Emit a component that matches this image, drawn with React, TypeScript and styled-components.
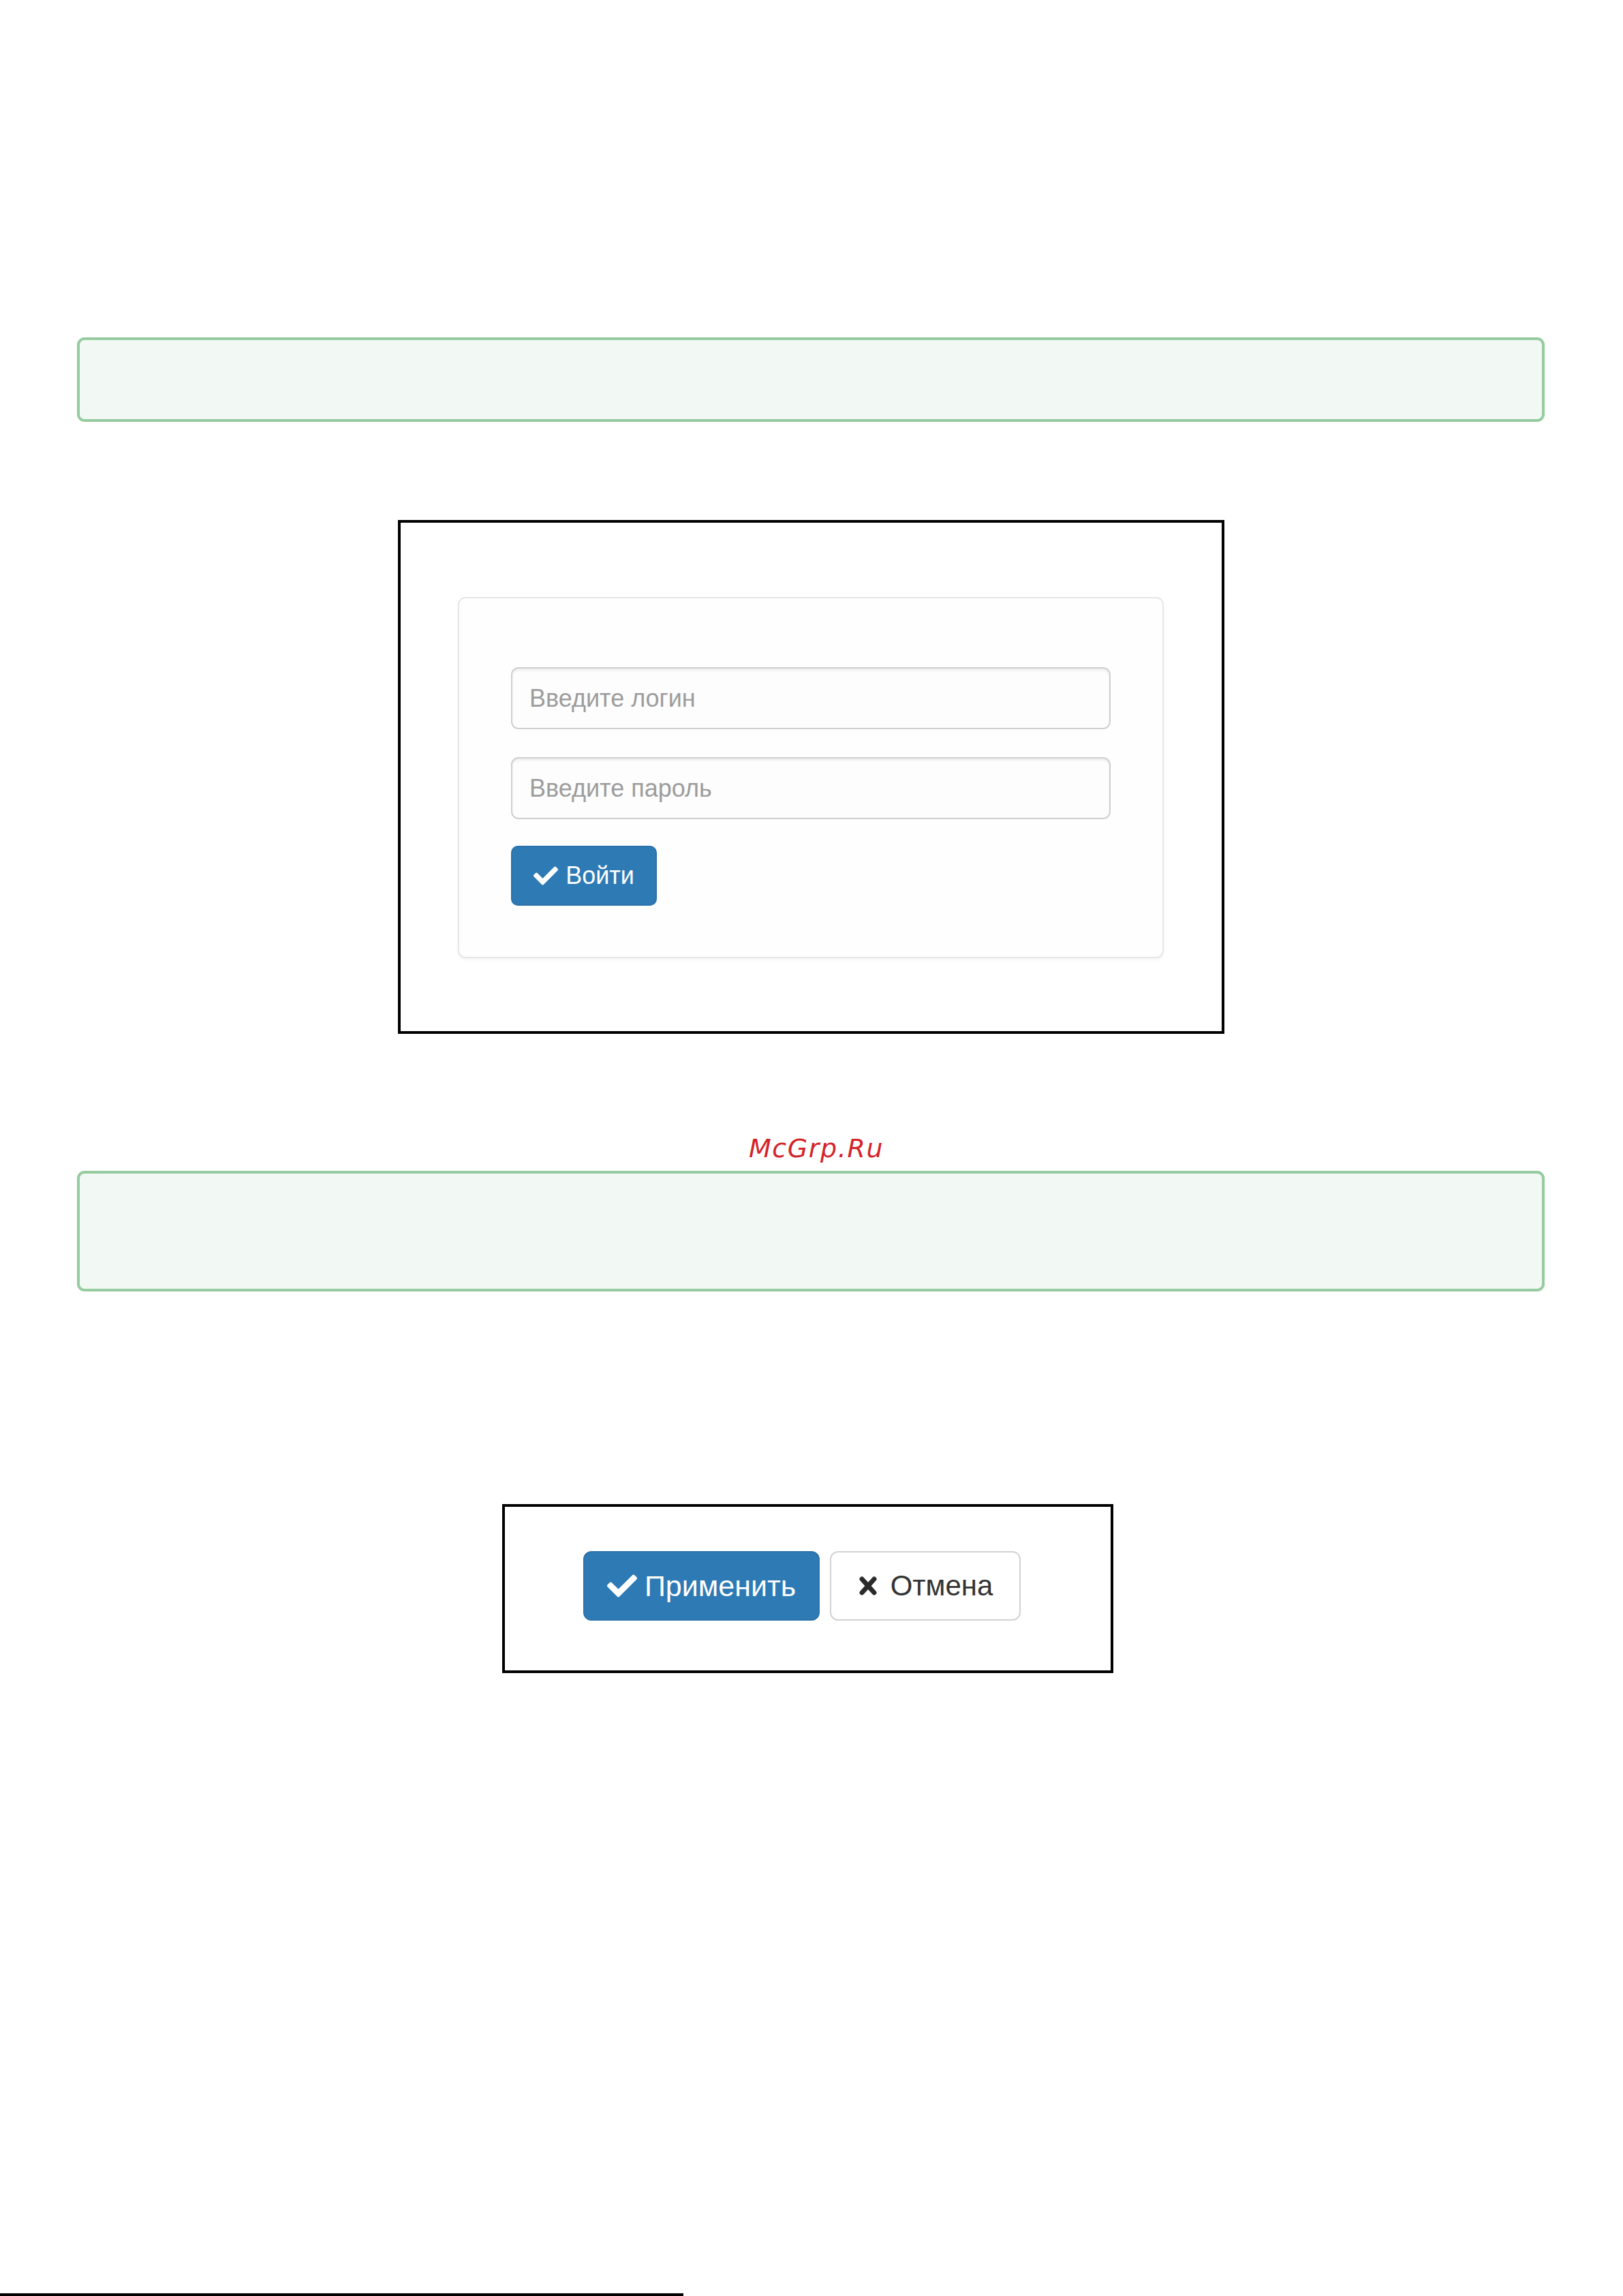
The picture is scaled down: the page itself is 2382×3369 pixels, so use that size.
import React from "react";
import styled, { createGlobalStyle } from "styled-components";

const Global = createGlobalStyle`
  html, body { margin: 0; padding: 0; background: #ffffff; }
  body { font-family: "Liberation Sans", Arial, sans-serif; }
  * { box-sizing: border-box; }
`;

const Page = styled.div`
  width: 2382px;
  height: 3369px;
  padding-top: 495px;
  display: flex;
  flex-direction: column;
  overflow: hidden;
`;

const NoteBox = styled.div<{ $h: number; $mt?: number }>`
  margin-top: ${(p) => p.$mt ?? 0}px;
  margin-left: 113px;
  width: 2154px;
  height: ${(p) => p.$h}px;
  border: 4px solid #96cb9f;
  border-radius: 11px;
  background: #f2f8f4;
`;

const Frame = styled.div<{ $top: number; $left: number; $w: number; $h: number }>`
  margin-top: ${(p) => p.$top}px;
  margin-left: ${(p) => p.$left}px;
  width: ${(p) => p.$w}px;
  height: ${(p) => p.$h}px;
  border: 4px solid #000;
  background: #fff;
`;

const LoginFrame = styled(Frame)`
  padding: 109px 84px 0 84px;
`;

const Panel = styled.div`
  width: 1036px;
  border: 2px solid #e6e6e6;
  border-radius: 11px;
  background: #fefefe;
  box-shadow: 0 3px 4px rgba(0, 0, 0, 0.04);
  padding: 101px 76px 75px 76px;
  display: flex;
  flex-direction: column;
`;

const Input = styled.div<{ $mt?: number }>`
  margin-top: ${(p) => p.$mt ?? 0}px;
  height: 91px;
  border: 2px solid #cfcfcf;
  border-radius: 11px;
  background: #fdfdfd;
  box-shadow: inset 0 3px 3px rgba(0, 0, 0, 0.06);
  display: flex;
  align-items: center;
  padding-left: 25px;
  font-size: 36px;
  color: #9c9c9c;
`;

const Btn = styled.div<{ $primary?: boolean; $w: number; $h: number; $fs: number; $r: number; $gap: number }>`
  width: ${(p) => p.$w}px;
  height: ${(p) => p.$h}px;
  border-radius: ${(p) => p.$r}px;
  background: ${(p) => (p.$primary ? "#2d7ab5" : "#ffffff")};
  border: 2px solid ${(p) => (p.$primary ? "#2b72aa" : "#d2d2d2")};
  color: ${(p) => (p.$primary ? "#ffffff" : "#333333")};
  font-size: ${(p) => p.$fs}px;
  display: flex;
  align-items: center;
  justify-content: center;
  gap: ${(p) => p.$gap}px;
  flex: none;
`;

const LoginBtn = styled(Btn)`
  margin-top: 39px;
`;

const Watermark = styled.div`
  margin-top: 146px;
  height: 44px;
  padding-left: 14px;
  text-align: center;
  font-family: "DejaVu Sans", sans-serif;
  font-style: italic;
  font-size: 38px;
  line-height: 44px;
  letter-spacing: 1.6px;
  color: #d42329;
`;

const ButtonsFrame = styled(Frame)`
  display: flex;
  align-items: center;
  gap: 15px;
  padding: 0 0 8px 115px;
`;

const BottomRule = styled.div`
  margin-top: 910px;
  width: 1003px;
  height: 4px;
  background: #000;
`;

const Check = ({ size }: { size: number }) => (
  <svg width={size} height={size} viewBox="0 0 512 512" fill="#ffffff">
    <path d="M173.898 439.404l-166.4-166.4c-9.997-9.997-9.997-26.206 0-36.204l36.203-36.204c9.997-9.998 26.207-9.998 36.204 0L192 312.69 432.095 72.596c9.997-9.997 26.207-9.997 36.204 0l36.203 36.204c9.997 9.997 9.997 26.206 0 36.204l-294.4 294.401c-9.998 9.997-26.207 9.997-36.204-.001z" />
  </svg>
);

const Cross = ({ size }: { size: number }) => (
  <svg width={size} height={size} viewBox="0 0 30 30">
    <path d="M6 5 L24 25 M24 5 L6 25" stroke="#2b2b2b" strokeWidth="7" strokeLinecap="round" />
  </svg>
);

export default function App() {
  return (
    <>
      <Global />
      <Page>
        <NoteBox $h={124} />
        <LoginFrame $top={144} $left={584} $w={1213} $h={754}>
          <Panel>
            <Input>Введите логин</Input>
            <Input $mt={41}>Введите пароль</Input>
            <LoginBtn $primary $w={214} $h={88} $fs={36} $r={10} $gap={11}>
              <Check size={36} />
              <span>Войти</span>
            </LoginBtn>
          </Panel>
        </LoginFrame>
        <Watermark>McGrp.Ru</Watermark>
        <NoteBox $h={177} $mt={11} />
        <ButtonsFrame $top={312} $left={737} $w={897} $h={248}>
          <Btn $primary $w={347} $h={102} $fs={43} $r={12} $gap={11}>
            <Check size={44} />
            <span>Применить</span>
          </Btn>
          <Btn $w={280} $h={102} $fs={42} $r={12} $gap={18}>
            <Cross size={30} />
            <span>Отмена</span>
          </Btn>
        </ButtonsFrame>
        <BottomRule />
      </Page>
    </>
  );
}
